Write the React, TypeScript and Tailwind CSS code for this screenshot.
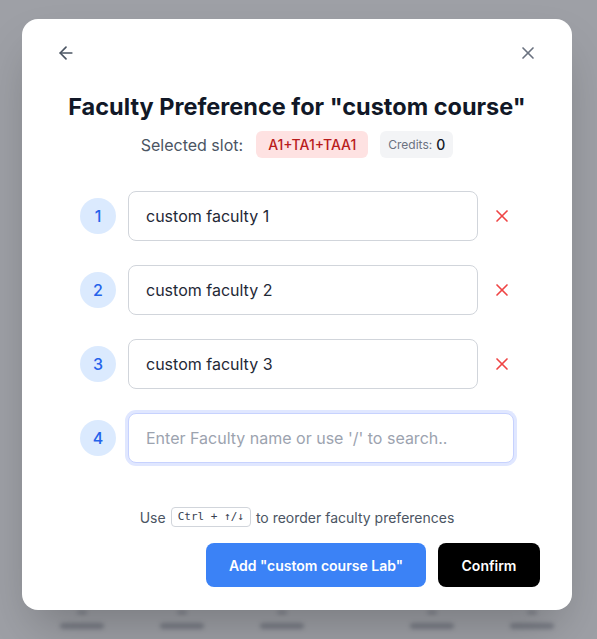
import React from "react";

const XIcon = ({ className }: { className?: string }) => (
  <svg viewBox="0 0 24 24" fill="none" stroke="currentColor" strokeWidth={2} strokeLinecap="round" strokeLinejoin="round" className={className}>
    <path d="M18 6 6 18" />
    <path d="m6 6 12 12" />
  </svg>
);

const ArrowLeft = ({ className }: { className?: string }) => (
  <svg viewBox="0 0 24 24" fill="none" stroke="currentColor" strokeWidth={2} strokeLinecap="round" strokeLinejoin="round" className={className}>
    <path d="m12 19-7-7 7-7" />
    <path d="M19 12H5" />
  </svg>
);

function Row({ n, value }: { n: number; value?: string }) {
  return (
    <div className="flex items-center gap-3">
      <div className="w-9 h-9 shrink-0 rounded-full bg-[#dbeafe] text-[#2563eb] flex items-center justify-center text-[16px] font-medium">
        {n}
      </div>
      {value !== undefined ? (
        <>
          <div className="flex-1 h-[50px] rounded-lg border border-[#d1d5db] bg-white flex items-center px-[17px] text-[16px] text-[#1f2937]">
            {value}
          </div>
          <button className="w-6 h-6 flex items-center justify-center text-[#ef4444]">
            <XIcon className="w-[20px] h-[20px]" />
          </button>
        </>
      ) : (
        <div className="flex-1 h-[50px] rounded-lg border border-[#c7d2fe] ring-[3px] ring-[#e0e7ff] bg-white flex items-center px-[17px] text-[16px] text-[#9ca3af]">
          Enter Faculty name or use '/' to search..
        </div>
      )}
    </div>
  );
}

export default function App() {
  const bgCols = [60, 160, 260, 410, 510];
  return (
    <div
      className="relative w-[597px] h-[639px] overflow-hidden bg-[#9ea0a6]"
      style={{ fontFamily: "Inter, 'Noto Sans', sans-serif" }}
    >
      <div className="absolute left-0 right-0 top-[611px] h-[30px] blur-[2px] opacity-50">
        {bgCols.map((x) => (
          <div key={x} className="absolute flex flex-col items-center" style={{ left: x }}>
            <div className="w-[10px] h-[3px] bg-[#555a66] rounded" />
            <div className="mt-[9px] w-[44px] h-[6px] bg-[#555a66] rounded" />
          </div>
        ))}
      </div>
      <div className="absolute left-[22px] top-[19px] w-[550px] h-[591px] bg-white rounded-2xl shadow-2xl flex flex-col px-[26px] pt-4">
        <div className="flex items-center justify-between">
          <button className="p-2 text-[#4b5563]">
            <ArrowLeft className="w-5 h-5" />
          </button>
          <button className="p-2 text-[#6b7280]">
            <XIcon className="w-5 h-5" />
          </button>
        </div>
        <h1 className="mt-[20px] text-center text-[23.5px] leading-[32px] font-bold text-[#111827]">
          Faculty Preference for "custom course"
        </h1>
        <div className="mt-[8px] flex items-center justify-center gap-3">
          <span className="text-[16px] text-[#4b5563]">Selected slot:</span>
          <span className="ml-[1px] h-[27px] px-3 rounded-md bg-[#fee2e2] text-[#b91c1c] text-[14px] font-medium flex items-center">
            A1+TA1+TAA1
          </span>
          <span className="h-[27px] px-2 rounded-md bg-[#f3f4f6] flex items-center gap-1">
            <span className="text-[12px] text-[#6b7280]">Credits:</span>
            <span className="text-[14px] font-medium text-[#111827]">0</span>
          </span>
        </div>
        <div className="mt-[33px] mx-auto w-[434px] flex flex-col gap-6">
          <Row n={1} value="custom faculty 1" />
          <Row n={2} value="custom faculty 2" />
          <Row n={3} value="custom faculty 3" />
          <Row n={4} />
        </div>
        <div className="mt-[44px] flex items-center justify-center gap-[5px] text-[14px] text-[#4b5563] h-5">
          <span>Use</span>
          <kbd
            className="px-[6px] h-[20px] flex items-center rounded border border-[#d1d5db] bg-white text-[11px] text-[#374151]"
            style={{ fontFamily: "'DejaVu Sans Mono', 'Liberation Mono', monospace" }}
          >
            Ctrl + ↑/↓
          </kbd>
          <span>to reorder faculty preferences</span>
        </div>
        <div className="mt-4 flex justify-end gap-3 pr-[6px]">
          <button className="w-[220px] h-[44px] rounded-lg bg-[#3b82f6] text-white text-[14px] font-semibold">
            Add "custom course Lab"
          </button>
          <button className="w-[102px] h-[44px] rounded-lg bg-black text-white text-[14px] font-semibold">
            Confirm
          </button>
        </div>
      </div>
    </div>
  );
}
